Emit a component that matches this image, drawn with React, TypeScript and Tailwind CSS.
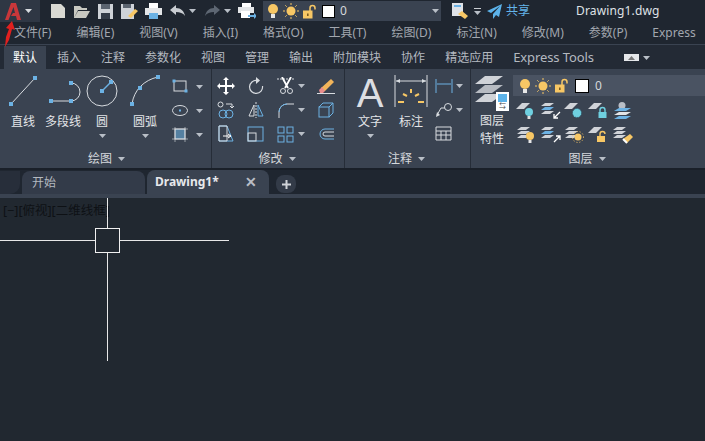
import type { ReactNode } from 'react';

const W = '#d8dce0';
const B = '#6cb2e4';
const Y = '#f7c765';
const T = '#6fd0e0';

function Ic({ w = 18, h = 18, children }: { w?: number; h?: number; children: ReactNode }) {
  return (
    <svg width={w} height={h} viewBox={`0 0 ${w} ${h}`} fill="none" className="shrink-0">
      {children}
    </svg>
  );
}

function Caret({ className = 'text-[#b9bfc7]' }: { className?: string }) {
  return (
    <svg width="7" height="4" viewBox="0 0 7 4" className={`shrink-0 ${className}`}>
      <path d="M0 0h7L3.5 4z" fill="currentColor" />
    </svg>
  );
}

function Dot({ x, y, s = 4 }: { x: number; y: number; s?: number }) {
  return <rect x={x - s / 2} y={y - s / 2} width={s} height={s} fill={B} />;
}

function Bulb() {
  return (
    <svg width="12" height="16" viewBox="0 0 12 16" className="shrink-0">
      <circle cx="6" cy="6" r="5" fill={Y} />
      <rect x="4" y="11" width="4" height="4" fill="#e8e8e8" />
    </svg>
  );
}

function Sun() {
  return (
    <svg width="16" height="16" viewBox="0 0 16 16" className="shrink-0">
      <circle cx="8" cy="8" r="4.5" fill={Y} />
      <path d="M8 0v2M8 14v2M0 8h2M14 8h2M2.3 2.3l1.4 1.4M12.3 12.3l1.4 1.4M2.3 13.7l1.4-1.4M12.3 3.7l1.4-1.4" stroke={Y} />
    </svg>
  );
}

function Lock() {
  return (
    <svg width="14" height="15" viewBox="0 0 14 15" className="shrink-0">
      <path d="M7 7V4a2.5 2.5 0 015 0v1.5" stroke={Y} strokeWidth="1.5" fill="none" />
      <rect x="0" y="6.5" width="9.5" height="8" fill={Y} />
      <rect x="4" y="9.5" width="1.6" height="2.5" fill="#7a5a20" />
    </svg>
  );
}

// flat sheet, the single layer in the small icons
function Sheet({ y = 0 }: { y?: number }) {
  return <path d={`M6 ${y}h8l-6 6H0z`} fill="#d0d3d8" />;
}

function Stack({ mid = '#d0d3d8' }: { mid?: string }) {
  return (
    <>
      <path d="M5 1h9l-4 3H1z" fill="#d0d3d8" />
      <path d="M5 5h9l-4 3H1z" fill={mid} />
      <path d="M5 9h9l-4 3H1z" fill="#d0d3d8" />
    </>
  );
}

const layerIcons: ReactNode[] = [
  <>
    <Sheet y={1} />
    <circle cx="13" cy="10" r="4" fill={T} />
    <rect x="11.5" y="14" width="3" height="3" fill="#e0e0e0" />
  </>,
  <>
    <Stack mid={B} />
    <path d="M20 10l-6 6m0-4v4h4" stroke="#fff" strokeWidth="1.3" />
  </>,
  <>
    <Sheet y={1} />
    <circle cx="13" cy="11" r="4.5" fill={T} stroke="#2f5568" strokeDasharray="1 1" />
  </>,
  <>
    <Sheet y={1} />
    <path d="M12 10V8a2.5 2.5 0 015 0v2" stroke={T} strokeWidth="1.4" />
    <rect x="10.5" y="10" width="8" height="6" fill={T} />
  </>,
  <>
    <circle cx="10" cy="3.5" r="3.5" fill="#b9bec6" />
    <path d="M7 6h12l-5 3H2z" fill={B} />
    <path d="M7 10h12l-5 3H2z" fill="#e2e4e7" />
    <path d="M7 14h12l-5 3H2z" fill={B} />
  </>,
  <>
    <Stack />
    <circle cx="14" cy="10" r="4" fill={Y} />
    <rect x="12.5" y="14" width="3" height="3" fill="#e8e8e8" />
  </>,
  <>
    <Stack mid={B} />
    <path d="M14 16l6-6m-4 0h4v4" stroke="#fff" strokeWidth="1.3" />
  </>,
  <>
    <Stack />
    <circle cx="14" cy="11" r="3.5" fill={Y} />
    <circle cx="14" cy="11" r="5.5" stroke={Y} strokeDasharray="1 2" />
  </>,
  <>
    <Sheet y={1} />
    <path d="M12 10V8a2.5 2.5 0 015 0" stroke={Y} strokeWidth="1.4" />
    <rect x="9" y="10" width="8" height="6" fill={Y} />
  </>,
  <>
    <Stack />
    <path d="M11 13l7-5 3 3-6 6z" fill={Y} />
    <path d="M11 13l4 4" stroke="#fff" strokeWidth="2" />
  </>,
];

function BigTool({ label, width, icon, caret }: { label: string; width: string; icon: ReactNode; caret?: boolean }) {
  return (
    <div className={`flex flex-col items-center ${width}`}>
      <div className="h-[43px] flex items-center justify-center">{icon}</div>
      <span className="text-[12px] leading-[17px] text-[#e3e5e8] mt-[1px]">{label}</span>
      {caret && (
        <div className="mt-[4px]">
          <Caret />
        </div>
      )}
    </div>
  );
}

function PanelTitle({ label }: { label: string }) {
  return (
    <div className="h-[18px] flex items-center justify-center gap-[6px] text-[12px] text-[#d5d8dc] shrink-0 pr-[2px]">
      {label}
      <Caret />
    </div>
  );
}

const menus = ['文件(F)', '编辑(E)', '视图(V)', '插入(I)', '格式(O)', '工具(T)', '绘图(D)', '标注(N)', '修改(M)', '参数(P)', 'Express'];
const tabs = ['插入', '注释', '参数化', '视图', '管理', '输出', '附加模块', '协作', '精选应用', 'Express Tools'];

const modifyIcons: ReactNode[] = [
  <Ic key="move">
    <path d="M9 2v14M2 9h14" stroke="#fff" strokeWidth="2" />
    <path d="M9 0l3 3H6zM9 18l3-3H6zM0 9l3-3v6zM18 9l-3-3v6z" fill="#fff" />
  </Ic>,
  <Ic key="rotate">
    <path d="M10 3.5A6.5 6.5 0 1015.5 9" stroke={W} strokeWidth="1.2" />
    <path d="M9 0l4 3.5L9 7z" fill={W} />
  </Ic>,
  <Ic key="trim">
    <path d="M0 2h18" stroke={W} strokeDasharray="2 1" />
    <path d="M5 0l6 11M14 0L8 11" stroke="#fff" strokeWidth="1.8" />
    <circle cx="6" cy="14" r="2.5" stroke={W} />
    <circle cx="13" cy="14" r="2.5" stroke={W} />
  </Ic>,
  <Ic key="erase">
    <path d="M4 11L14 2l3 3-9 9H5z" fill="#f1b45a" />
    <path d="M2 13l3-3 3 4-2 2H3z" fill="#e98c8c" />
    <path d="M0 16.5h18" stroke={W} />
  </Ic>,
  <Ic key="copy">
    <rect x="1" y="1" width="5" height="5" rx="2.5" stroke={W} />
    <path d="M9 3h6v3m-2-1l2 2 2-2" stroke={W} />
    <circle cx="6" cy="13" r="4" stroke={B} />
    <circle cx="12" cy="13" r="4" stroke={B} />
  </Ic>,
  <Ic key="mirror">
    <path d="M7 4L2 15h5z" stroke={W} />
    <path d="M11 4l5 11h-5z" stroke={B} />
    <path d="M9 1v16" stroke={W} strokeDasharray="2 1" />
  </Ic>,
  <Ic key="fillet">
    <path d="M2 17V11a8 8 0 018-8h7" stroke={W} />
    <path d="M2 11a8 8 0 018-8" stroke={B} />
  </Ic>,
  <Ic key="explode">
    <rect x="2" y="6" width="10" height="10" stroke={B} />
    <path d="M2 6l4-4h10v10l-4 4M12 6l4-4" stroke={B} />
  </Ic>,
  <Ic key="stretch">
    <path d="M2 1h8l6 15H2z" stroke={B} />
    <path d="M2 1h8v15H2z" stroke={W} />
    <path d="M6 11h8m-3-2l3 2-3 2" stroke="#fff" />
  </Ic>,
  <Ic key="scale">
    <rect x="1" y="2" width="15" height="14" stroke={B} />
    <rect x="1" y="8" width="8" height="8" stroke={W} />
  </Ic>,
  <Ic key="array">
    <rect x="1" y="2" width="6" height="6" stroke={B} />
    <rect x="10" y="2" width="6" height="6" stroke={B} />
    <rect x="1" y="11" width="6" height="6" stroke={B} />
    <rect x="10" y="11" width="6" height="6" stroke={B} />
  </Ic>,
  <Ic key="offset">
    <path d="M17 4H8a5 5 0 000 10h9" stroke={B} />
    <path d="M17 7H8a2 2 0 000 4h9" stroke={W} />
  </Ic>,
];

export default function App() {
  return (
    <div className="w-[705px] h-[441px] overflow-hidden flex flex-col relative bg-[#212830] font-['Noto_Sans','Noto_Sans_CJK_SC',sans-serif]">
      {/* title bar */}
      <div className="h-[22px] flex items-center bg-[#1f2630] shrink-0">
        <div className="w-[40px] h-[22px] bg-[#2f3744] flex items-center gap-[4px] pl-[5px]">
          <svg width="16" height="17" viewBox="0 0 16 17" className="shrink-0">
            <path d="M6 0h5l5 17h-4l-1-4H6l2-3h2L8.500 4 3.500 17H0z" fill="#c9373a" />
          </svg>
          <Caret className="text-[#d8dce0]" />
        </div>
        <div className="flex items-center gap-[7px] ml-[10px]">
          <Ic w={16} h={16}><path d="M1 1h10l4 4v10H1z" fill="#d9d9d3" /></Ic>
          <Ic w={17} h={16}><path d="M1 3h6l2 2h5v2H5l-4 8z M5 8h12l-4 7H1z" fill="#c9c9c2" /></Ic>
          <Ic w={17} h={16}><path d="M1 1h15v15H1z" fill="#cfd3d8" /><rect x="4" y="1" width="9" height="5" fill="#5b6470" /><rect x="4" y="10" width="9" height="6" fill="#333b47" /></Ic>
          <div className="-ml-[1px]">
            <Ic w={18} h={16}><path d="M1 1h13v15H1z" fill="#cfd3d8" /><rect x="3" y="1" width="8" height="4" fill="#5b6470" /><path d="M8 13l7-7 3 2-7 7z" fill={Y} /></Ic>
          </div>
          <Ic w={17} h={16}><rect x="4" y="0" width="9" height="5" fill="#fff" /><rect x="0" y="5" width="17" height="7" fill="#e4e6e8" /><rect x="4" y="10" width="9" height="6" fill={B} /></Ic>
          <div className="flex items-center gap-[4px] ml-[1px]">
            <Ic w={15} h={12}><path d="M0 5l6-5v3c5 0 8 3 9 8-2-3-5-4-9-4v3z" fill="#c9cdd2" /></Ic>
            <Caret />
          </div>
          <div className="flex items-center gap-[4px] ml-[2px]">
            <Ic w={15} h={12}><path d="M15 5L9 0v3C4 3 1 6 0 11c2-3 5-4 9-4v3z" fill="#5d6672" /></Ic>
            <Caret />
          </div>
          <Ic w={18} h={16}><rect x="4" y="0" width="9" height="4" fill="#fff" /><rect x="0" y="4" width="16" height="6" fill="#e4e6e8" /><rect x="3" y="8" width="9" height="7" fill="#fff" /><path d="M10 12h6v-2l3 3-3 3v-2h-6z" fill={B} /></Ic>
        </div>
        <div className="w-[178px] h-[20px] ml-[7px] bg-[#3a4351] flex items-center pl-[4px] pr-[2px] gap-[4px]">
          <Bulb />
          <Sun />
          <Lock />
          <div className="w-[13px] h-[13px] bg-white border border-black ml-[1px]" />
          <span className="text-[12px] text-[#d5d8dc] flex-1 ml-[1px]">0</span>
          <Caret />
        </div>
        <div className="ml-[11px]">
          <Ic w={16} h={18}><rect x="0" y="1" width="11" height="13" fill="#dfe3e8" /><rect x="2" y="3" width="7" height="2" fill={B} /><path d="M6 12l4-3 6 5-3 3z" fill={Y} /></Ic>
        </div>
        <div className="ml-[6px] flex flex-col gap-[2px] items-center">
          <div className="w-[7px] h-[1px] bg-[#c9cdd2]" />
          <Caret />
        </div>
        <div className="ml-[6px]">
          <Ic w={15} h={15}><path d="M15 0L0 7l4 2 9-7-7 8v5l3-4 3 2z" fill="#5cb3ea" /></Ic>
        </div>
        <span className="ml-[4px] text-[12px] text-[#63b4ea]">共享</span>
        <span className="ml-[46px] text-[12px] tracking-[0.15px] text-[#dfe2e6]">Drawing1.dwg</span>
      </div>

      {/* menu bar */}
      <div className="h-[22px] flex items-center gap-[25px] pl-[14px] bg-[#1f2630] text-[12px] text-[#a2a7af] whitespace-nowrap shrink-0">
        {menus.map(m => (
          <span key={m}>{m}</span>
        ))}
      </div>

      {/* ribbon tabs */}
      <div className="h-[25px] flex items-end border-t border-[#3a4351] bg-[#232a35] text-[12px] text-[#b4b9c0] whitespace-nowrap shrink-0">
        <div className="h-[23px] w-[42px] ml-[4px] bg-[#3a4351] flex items-center justify-center text-white">默认</div>
        <div className="h-[23px] flex items-center gap-[20px] ml-[11px]">
          {tabs.map(t => (
            <span key={t} className={t === 'Express Tools' ? 'text-[13px] tracking-[-0.1px]' : ''}>{t}</span>
          ))}
          <div className="ml-[10px] flex items-center gap-[4px]">
            <div className="w-[15px] h-[7px] bg-[#e5e7ea] flex items-center justify-center">
              <Caret className="text-[#777] rotate-180" />
            </div>
            <Caret />
          </div>
        </div>
      </div>

      {/* ribbon panels */}
      <div className="h-[99px] flex bg-[#3a4351] shrink-0 text-white">
        <div className="w-[212px] border-r border-[#262d38] flex flex-col pl-[4px]">
          <div className="flex-1 flex">
            <BigTool
              label="直线"
              width="w-[38px]"
              icon={
                <Ic w={32} h={34}>
                  <path d="M4 30L28 4" stroke={W} />
                  <Dot x={4} y={30} />
                  <Dot x={28} y={4} />
                </Ic>
              }
            />
            <BigTool
              label="多段线"
              width="w-[42px]"
              icon={
                <Ic w={36} h={28}>
                  <path d="M6 24h20a9 9 0 000-18" stroke={W} />
                  <Dot x={6} y={24} />
                  <Dot x={26} y={24} />
                  <Dot x={26} y={6} />
                </Ic>
              }
            />
            <BigTool
              label="圆"
              width="w-[36px]"
              caret
              icon={
                <Ic w={32} h={32}>
                  <circle cx="16" cy="16" r="15" stroke={W} />
                  <path d="M16 16l9-9" stroke={B} strokeWidth="1.4" />
                  <Dot x={16} y={16} />
                  <Dot x={25} y={7} />
                </Ic>
              }
            />
            <BigTool
              label="圆弧"
              width="w-[50px]"
              caret
              icon={
                <Ic w={34} h={34}>
                  <path d="M4 30C6 16 16 6 30 3" stroke={W} />
                  <Dot x={4} y={30} />
                  <Dot x={12} y={14} />
                  <Dot x={30} y={3} />
                </Ic>
              }
            />
            <div className="flex flex-col gap-[9px] pt-[10px] pl-[2px]">
              <div className="flex items-center gap-[8px]">
                <Ic w={16} h={15}>
                  <rect x="2" y="2" width="12" height="10" stroke={W} />
                  <Dot x={2} y={2} s={3} />
                  <Dot x={14} y={12} s={3} />
                </Ic>
                <Caret />
              </div>
              <div className="flex items-center gap-[8px]">
                <Ic w={16} h={15}>
                  <ellipse cx="8" cy="7.500" rx="7.500" ry="5" stroke={W} />
                  <Dot x={8} y={7.5} s={2} />
                </Ic>
                <Caret />
              </div>
              <div className="flex items-center gap-[8px]">
                <Ic w={16} h={15}>
                  <rect x="3" y="2" width="10" height="10" fill={B} fillOpacity=".55" stroke={W} />
                  <path d="M0 2h16M0 12h16M3 0v15M13 0v15" stroke={W} strokeWidth=".6" />
                </Ic>
                <Caret />
              </div>
            </div>
          </div>
          <PanelTitle label="绘图" />
        </div>

        <div className="w-[133px] border-r border-[#262d38] flex flex-col">
          <div className="flex-1 pl-[5px] pt-[8px]">
            <div className="grid grid-cols-[30px_30px_40px_20px] gap-y-[6px]">
              {modifyIcons.map((icon, i) => (
                <div key={i} className="h-[18px] flex items-center gap-[3px]">
                  {icon}
                  {(i === 2 || i === 6 || i === 10) && <Caret />}
                </div>
              ))}
            </div>
          </div>
          <PanelTitle label="修改" />
        </div>

        <div className="w-[126px] border-r border-[#262d38] flex flex-col">
          <div className="flex-1 flex pl-[6px]">
            <BigTool
              label="文字"
              width="w-[38px]"
              caret
              icon={<span className="text-[40px] leading-none text-[#dcdee2] font-['Liberation_Sans',sans-serif] mt-[4px]">A</span>}
            />
            <BigTool
              label="标注"
              width="w-[44px]"
              icon={
                <Ic w={34} h={32}>
                  <path d="M1 0v32M33 0v32M2 6h30" stroke={W} />
                  <path d="M2 6l4-2v4zM32 6l-4-2v4z" fill={W} />
                  <path d="M17 14v4M9 19l4 2M25 19l-4 2M4 27h6M24 27h6" stroke={Y} strokeWidth="2" />
                </Ic>
              }
            />
            <div className="flex flex-col gap-[8px] pt-[9px] pl-[2px]">
              <div className="flex items-center gap-[3px]">
                <Ic w={18} h={16}>
                  <path d="M1 1v14M17 1v14" stroke={B} />
                  <path d="M2 6h14" stroke={B} />
                </Ic>
                <Caret />
              </div>
              <div className="flex items-center gap-[3px]">
                <Ic w={18} h={16}>
                  <circle cx="13" cy="5" r="3.500" stroke={W} />
                  <path d="M10 6H6L2 13" stroke={W} />
                  <path d="M1 15l1-5 3 3z" fill={W} />
                </Ic>
                <Caret />
              </div>
              <Ic w={18} h={15}>
                <path d="M1 1h15v13H1zM1 5h15M1 9h15M6 5v9M11 5v9" stroke={W} />
              </Ic>
            </div>
          </div>
          <PanelTitle label="注释" />
        </div>

        <div className="flex-1 flex flex-col">
          <div className="flex-1 flex">
            <div className="w-[42px] flex flex-col items-center pt-[7px]">
              <div className="relative w-[34px] h-[35px]">
                <Ic w={34} h={35}>
                  <path d="M10 0h18L17 8H0z" fill="#d0d3d8" />
                  <path d="M10 9h18L17 17H0z" fill="#b7bbc2" />
                  <path d="M10 18h18L17 26H0z" fill="#d0d3d8" />
                </Ic>
                <div className="absolute right-0 bottom-0 w-[13px] h-[19px] bg-white border-[2px] border-white">
                  <div className="h-[8px] bg-[#5cb3ea]" />
                  <div className="text-[7px] leading-[8px] text-center text-[#444]">⇆</div>
                </div>
              </div>
              <span className="text-[12px] leading-[18px] text-[#e3e5e8] mt-[1px]">图层</span>
              <span className="text-[12px] leading-[18px] text-[#e3e5e8]">特性</span>
            </div>
            <div className="flex-1 pt-[6px]">
              <div className="h-[21px] bg-[#4a5362] flex items-center gap-[4px] pl-[6px]">
                <Bulb />
                <Sun />
                <Lock />
                <div className="w-[14px] h-[14px] bg-white border border-black ml-[2px]" />
                <span className="text-[12px] text-[#d5d8dc] ml-[2px]">0</span>
              </div>
              <div className="grid grid-cols-[24px_24px_24px_24px_24px] gap-y-[6px] pl-[3px] mt-[6px]">
                {layerIcons.map((icon, i) => (
                  <Ic key={i} w={22} h={18}>
                    {icon}
                  </Ic>
                ))}
              </div>
            </div>
          </div>
          <PanelTitle label="图层" />
        </div>
      </div>

      {/* file tabs */}
      <div className="h-[2px] bg-[#1a2029] shrink-0" />
      <div className="h-[24px] flex items-end bg-[#1f2630] shrink-0">
        <div className="w-[20px] h-[23px] bg-[#272e3a] rounded-br-[10px] mr-[2px]" />
        <div className="w-[123px] h-[23px] bg-[#333b49] rounded-t-[8px] pl-[10px] flex items-center text-[12px] text-[#b4b9c0]">开始</div>
        <div className="w-[122px] h-[24px] ml-[2px] bg-[#3a4351] rounded-t-[8px] pl-[8px] pr-[12px] flex items-center justify-between text-[12px] font-bold text-[#e6e8eb]">
          Drawing1*
          <span className="text-[#b9bdc4] text-[14px] leading-none">✕</span>
        </div>
        <div className="w-[20px] h-[18px] ml-[7px] mb-[1px] bg-[#333b48] rounded-[8px] flex items-center justify-center">
          <Ic w={9} h={9}><path d="M4.500 0v9M0 4.500h9" stroke="#d0d3d8" strokeWidth="2" /></Ic>
        </div>
      </div>
      <div className="h-[4px] bg-[#3a4351] shrink-0" />

      {/* canvas */}
      <div className="flex-1 relative bg-[#212830]">
        <span className="absolute left-[3px] top-[4px] text-[12.5px] leading-[18px] text-[#0e1115] whitespace-nowrap">[−][俯视][二维线框]</span>
        <div className="absolute left-[107px] top-0 w-[1px] h-[30px] bg-[#e8e8e8]" />
        <div className="absolute left-[107px] top-[54px] w-[1px] h-[109px] bg-[#e8e8e8]" />
        <div className="absolute left-0 top-[42px] w-[95px] h-[1px] bg-[#e8e8e8]" />
        <div className="absolute left-[120px] top-[42px] w-[109px] h-[1px] bg-[#e8e8e8]" />
        <div className="absolute left-[95px] top-[30px] w-[25px] h-[25px] border border-[#f0f0f0]" />
      </div>

      {/* red marker arrow */}
      <svg width="12" height="26" viewBox="0 0 12 26" className="absolute left-[4px] top-[21px]">
        <path d="M8 0l3 9-3-1-3 11-4 7 1-10 3-8-3-1z" fill="#e0201f" />
      </svg>
    </div>
  );
}
